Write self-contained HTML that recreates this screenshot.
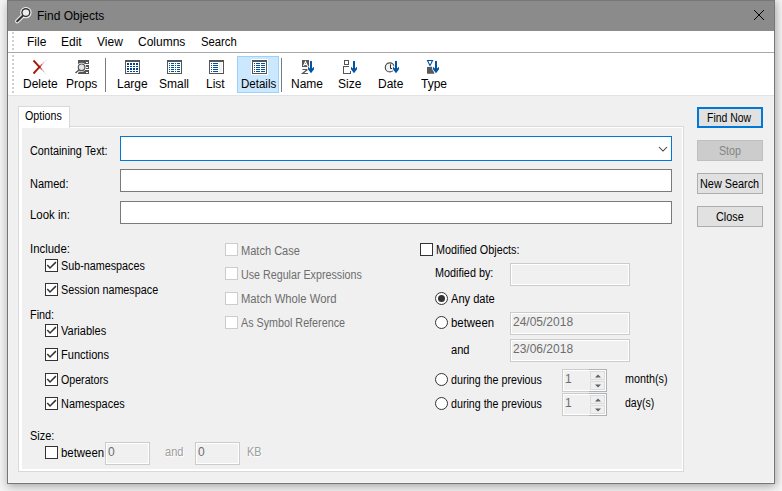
<!DOCTYPE html>
<html><head><meta charset="utf-8">
<style>
*{margin:0;padding:0;box-sizing:border-box}
html,body{width:782px;height:491px;overflow:hidden;background:#f4f4f4;position:relative;font-family:"Liberation Sans",sans-serif;color:#000}
.a{position:absolute}
.t{position:absolute;white-space:nowrap;line-height:normal}
.s12{font-size:12px}
.s11{font-size:11px}
.m{font-size:12px;transform-origin:0 0}
#win{left:7px;top:0;width:768px;height:484px;background:#f0f0f0;border:1px solid #767676;border-top:none;box-shadow:inset 1px 0 0 #f5f5f5,inset -1px -1px 0 #f5f5f5,0 3px 9px rgba(0,0,0,0.27),4px 0 5px rgba(0,0,0,0.07)}
#title{left:7px;top:0;width:768px;height:31px;background:#8b8b8b;border:1px solid #777;border-bottom:none}
.cb{position:absolute;width:13px;height:13px;border:1px solid #333;background:#fff}
.cbd{border-color:#cccccc}
.rd{position:absolute;width:13px;height:13px;border:1px solid #333;border-radius:50%;background:#fff}
.fld{position:absolute;border:1px solid #7a7a7a;background:#fff}
.dis{position:absolute;border:1px solid #cccccc;background:#f0f0f0;box-shadow:inset 0 0 0 1px #fff}
.btn{position:absolute;left:697px;width:66px;height:21px;border:1px solid #adadad;background:#e1e1e1;font-size:11px;text-align:center}
.g{color:#6d6d6d}
.gd{color:#9d9d9d;text-shadow:1px 1px 0 #fff}
.spb{position:absolute;width:15px;height:9px;border:1px solid #dcdcdc;background:#efefef}
.spb svg{position:absolute;left:4px;top:2px}
.grip{position:absolute;left:12px;width:2px;background:repeating-linear-gradient(to bottom,#d0d0d0 0,#d0d0d0 2px,transparent 2px,transparent 4px)}
</style></head><body>
<div class="a" id="win"></div>
<div class="a" id="title"></div>
<!-- magnifier icon -->
<svg class="a" style="left:0;top:0" width="40" height="31" viewBox="0 0 40 31">
 <line x1="17.2" y1="21.3" x2="22.6" y2="15.9" stroke="#f2f2f2" stroke-width="4.2" stroke-linecap="round"/>
 <circle cx="25.9" cy="12.6" r="5.7" fill="#f2f2f2"/>
 <line x1="17.2" y1="21.3" x2="22.6" y2="15.9" stroke="#333" stroke-width="2.1" stroke-linecap="round"/>
 <circle cx="25.9" cy="12.6" r="4.6" fill="#333"/>
 <circle cx="25.9" cy="12.6" r="3.2" fill="#ededed"/>
</svg>
<div class="t s12" style="left:37px;top:9px">Find Objects</div>
<svg class="a" style="left:753px;top:9px" width="12" height="12" viewBox="0 0 12 12"><path d="M1 1L11 11M11 1L1 11" stroke="#000" stroke-width="1"/></svg>

<!-- menu bar -->
<div class="a" style="left:8px;top:31px;width:766px;height:21px;background:#fff"></div>
<div class="a" style="left:8px;top:52px;width:766px;height:1px;background:#a8a8a8"></div>
<div class="grip" style="top:32px;height:18px"></div>
<div class="t s12" style="left:27px;top:35px">File</div>
<div class="t s12" style="left:61px;top:35px">Edit</div>
<div class="t s12" style="left:97px;top:35px">View</div>
<div class="t s12" style="left:138px;top:35px">Columns</div>
<div class="t s12" style="left:201px;top:35px;transform:scaleX(0.94);transform-origin:0 0">Search</div>

<!-- toolbar -->
<div class="a" style="left:8px;top:53px;width:766px;height:42px;background:#fff"></div>
<div class="a" style="left:8px;top:95px;width:766px;height:1px;background:#e3e3e3"></div>
<div class="grip" style="top:55px;height:38px"></div>
<div class="a" style="left:105px;top:58px;width:1px;height:34px;background:#7a7a7a"></div>
<div class="a" style="left:281px;top:58px;width:1px;height:34px;background:#7a7a7a"></div>
<div class="a" style="left:237px;top:56px;width:42px;height:37px;background:#cce8ff;border:1px solid #99d1ff"></div>


<!-- toolbar icons -->
<svg class="a" style="left:0;top:0" width="782" height="100" viewBox="0 0 782 100">
 
 <line x1="33.50" y1="60.50" x2="40.26" y2="67.78" stroke="#a31a0b" stroke-opacity="1.0" stroke-width="1.9"/><line x1="40.26" y1="67.78" x2="42.08" y2="69.74" stroke="#a31a0b" stroke-opacity="0.6" stroke-width="1.4"/><line x1="42.08" y1="69.74" x2="44.16" y2="71.98" stroke="#a31a0b" stroke-opacity="0.3" stroke-width="1.1"/><line x1="44.16" y1="71.98" x2="46.50" y2="74.50" stroke="#a31a0b" stroke-opacity="0.12" stroke-width="1.0"/><line x1="33.50" y1="73.50" x2="40.26" y2="66.22" stroke="#a31a0b" stroke-opacity="1.0" stroke-width="1.9"/><line x1="40.26" y1="66.22" x2="42.08" y2="64.26" stroke="#a31a0b" stroke-opacity="0.6" stroke-width="1.4"/><line x1="42.08" y1="64.26" x2="44.16" y2="62.02" stroke="#a31a0b" stroke-opacity="0.3" stroke-width="1.1"/><line x1="44.16" y1="62.02" x2="46.50" y2="59.50" stroke="#a31a0b" stroke-opacity="0.12" stroke-width="1.0"/>
 <!-- props -->
 <g shape-rendering="crispEdges">
  <rect x="78" y="60" width="11" height="4" fill="#555"/>
  <rect x="78" y="65" width="11" height="4" fill="#555"/>
  <rect x="78" y="70" width="11" height="4" fill="#555"/>
  <rect x="86" y="61.6" width="2" height="1.4" fill="#fff"/>
  <rect x="86" y="66.6" width="2" height="1.4" fill="#fff"/>
  <rect x="86" y="71.6" width="2" height="1.4" fill="#fff"/>
 </g>
 <line x1="75.5" y1="73" x2="79.5" y2="69.5" stroke="#fff" stroke-width="3.2"/>
 <circle cx="81.6" cy="67.3" r="4.6" fill="#fff"/>
 <line x1="75.5" y1="73" x2="79.5" y2="69.5" stroke="#555" stroke-width="1.5"/>
 <circle cx="81.6" cy="67.3" r="3.3" fill="#e6e6e6" stroke="#555" stroke-width="1.2"/>
 <!-- view icons -->
 <g shape-rendering="crispEdges">
  <rect x="251" y="59" width="17" height="16" fill="#fff"/>
  <g id="frm">
   <rect x="125" y="60" width="15" height="14" fill="#555"/>
   <rect x="126" y="62" width="13" height="11" fill="#fff"/>
  </g>
  <rect x="167" y="60" width="15" height="14" fill="#555"/><rect x="168" y="62" width="13" height="11" fill="#fff"/>
  <rect x="209" y="60" width="15" height="14" fill="#555"/><rect x="210" y="62" width="13" height="11" fill="#fff"/>
  <rect x="252" y="60" width="15" height="14" fill="#555"/><rect x="253" y="62" width="13" height="11" fill="#fff"/>
  <g fill="#00408f">
   <rect x="127" y="63" width="2" height="2"/><rect x="130" y="63" width="2" height="2"/><rect x="133" y="63" width="2" height="2"/><rect x="136" y="63" width="2" height="2"/>
   <rect x="127" y="66" width="2" height="1"/><rect x="130" y="66" width="2" height="1"/><rect x="133" y="66" width="2" height="1"/><rect x="136" y="66" width="2" height="1"/>
   <rect x="127" y="68" width="2" height="2"/><rect x="130" y="68" width="2" height="2"/><rect x="133" y="68" width="2" height="2"/><rect x="136" y="68" width="2" height="2"/>
   <rect x="127" y="71" width="2" height="1"/><rect x="130" y="71" width="2" height="1"/><rect x="133" y="71" width="2" height="1"/><rect x="136" y="71" width="2" height="1"/>
  </g>
  <g fill="#0050a0">
   <rect x="169" y="63" width="1" height="1"/><rect x="171" y="63" width="3" height="1"/><rect x="175" y="63" width="1" height="1"/><rect x="177" y="63" width="3" height="1"/><rect x="211" y="63" width="1" height="1"/><rect x="213" y="63" width="5" height="1"/><rect x="254" y="63" width="1" height="1"/><rect x="256" y="63" width="4" height="1"/><rect x="261" y="63" width="4" height="1"/><rect x="169" y="65" width="1" height="1"/><rect x="171" y="65" width="3" height="1"/><rect x="175" y="65" width="1" height="1"/><rect x="177" y="65" width="3" height="1"/><rect x="211" y="65" width="1" height="1"/><rect x="213" y="65" width="5" height="1"/><rect x="254" y="65" width="1" height="1"/><rect x="256" y="65" width="4" height="1"/><rect x="261" y="65" width="4" height="1"/><rect x="169" y="67" width="1" height="1"/><rect x="171" y="67" width="3" height="1"/><rect x="175" y="67" width="1" height="1"/><rect x="177" y="67" width="3" height="1"/><rect x="211" y="67" width="1" height="1"/><rect x="213" y="67" width="5" height="1"/><rect x="254" y="67" width="1" height="1"/><rect x="256" y="67" width="4" height="1"/><rect x="261" y="67" width="4" height="1"/><rect x="169" y="69" width="1" height="1"/><rect x="171" y="69" width="3" height="1"/><rect x="175" y="69" width="1" height="1"/><rect x="177" y="69" width="3" height="1"/><rect x="211" y="69" width="1" height="1"/><rect x="213" y="69" width="5" height="1"/><rect x="254" y="69" width="1" height="1"/><rect x="256" y="69" width="4" height="1"/><rect x="261" y="69" width="4" height="1"/><rect x="169" y="71" width="1" height="1"/><rect x="171" y="71" width="3" height="1"/><rect x="175" y="71" width="1" height="1"/><rect x="177" y="71" width="3" height="1"/><rect x="211" y="71" width="1" height="1"/><rect x="213" y="71" width="5" height="1"/><rect x="254" y="71" width="1" height="1"/><rect x="256" y="71" width="4" height="1"/><rect x="261" y="71" width="4" height="1"/>
  </g>
  <rect x="219" y="62" width="3" height="10" fill="#f2f2f2"/>
 </g>
 <!-- sort icons -->
 <g shape-rendering="crispEdges" fill="#555">
  <rect x="302" y="60" width="7" height="7"/>
 </g>
 <path d="M303.5 66L305.5 61.5L307.5 66M304.2 64.5H306.8" stroke="#fff" stroke-width="1.1" fill="none"/>
 <path d="M302.5 69.5H307.5L302.5 73.5H308" stroke="#555" stroke-width="1.2" fill="none"/>
 <g fill="none" stroke="#555" stroke-width="1" shape-rendering="crispEdges">
  <rect x="344.5" y="60.5" width="4" height="4"/>
  <path d="M349 66.5H343.5V73.5H350.5V71"/>
 </g>
 <circle cx="389.8" cy="67.4" r="4.5" fill="#f2f2f2" stroke="#4a4a4a" stroke-width="1.15"/>
 <path d="M390.5 64.3V68.5H392.5" stroke="#333" stroke-width="1" fill="none"/>
 <path d="M427.5 60.5H432.5L430 65.5Z" fill="none" stroke="#0050a0" stroke-width="1.1"/>
 <rect x="429" y="61.6" width="2" height="1.5" fill="#fff"/>
 <path d="M427 67H431L432 66.5L434.5 73.8H427Z" fill="#5a5a5a"/>

<path d="M310 61.2Q311 60.2 312 61.2V68.6L314 66.8V69.3L311 73.2L308 69.3V66.8L310 68.6Z" fill="#fff" stroke="#fff" stroke-width="1.4"/><path d="M310 61.2Q311 60.2 312 61.2V68.6L314 66.8V69.3L311 73.2L308 69.3V66.8L310 68.6Z" fill="#0054a6"/>
<path d="M353 61.2Q354 60.2 355 61.2V68.6L357 66.8V69.3L354 73.2L351 69.3V66.8L353 68.6Z" fill="#fff" stroke="#fff" stroke-width="1.4"/><path d="M353 61.2Q354 60.2 355 61.2V68.6L357 66.8V69.3L354 73.2L351 69.3V66.8L353 68.6Z" fill="#0054a6"/>
<path d="M395 61.2Q396 60.2 397 61.2V68.6L399 66.8V69.3L396 73.2L393 69.3V66.8L395 68.6Z" fill="#fff" stroke="#fff" stroke-width="1.4"/><path d="M395 61.2Q396 60.2 397 61.2V68.6L399 66.8V69.3L396 73.2L393 69.3V66.8L395 68.6Z" fill="#0054a6"/>
<path d="M435 61.2Q436 60.2 437 61.2V68.6L439 66.8V69.3L436 73.2L433 69.3V66.8L435 68.6Z" fill="#fff" stroke="#fff" stroke-width="1.4"/><path d="M435 61.2Q436 60.2 437 61.2V68.6L439 66.8V69.3L436 73.2L433 69.3V66.8L435 68.6Z" fill="#0054a6"/>
</svg>
<div class="t s12" style="left:23px;top:77px">Delete</div>
<div class="t s12" style="left:66px;top:77px">Props</div>
<div class="t s12" style="left:117px;top:77px">Large</div>
<div class="t s12" style="left:159px;top:77px">Small</div>
<div class="t s12" style="left:206px;top:77px">List</div>
<div class="t s12" style="left:241px;top:77px;transform:scaleX(0.96);transform-origin:0 0">Details</div>
<div class="t s12" style="left:291px;top:77px">Name</div>
<div class="t s12" style="left:338px;top:77px">Size</div>
<div class="t s12" style="left:378px;top:77px">Date</div>
<div class="t s12" style="left:421px;top:77px">Type</div>

<!-- tab panel -->
<div class="a" style="left:18px;top:126px;width:666px;height:346px;border:1px solid #d9d9d9;background:#fff"></div>
<div class="a" style="left:22px;top:128px;width:660px;height:341px;background:#f0f0f0"></div>
<div class="a" style="left:18px;top:106px;width:52px;height:22px;border:1px solid #d9d9d9;border-bottom:none;background:#fff"></div>
<div class="t m" style="left:25px;top:109px;transform:scaleX(0.888)">Options</div>

<!-- buttons -->
<div class="btn" style="top:107px;border:2px solid #0078d7"></div>
<div class="btn" style="top:140px;border-color:#bfbfbf;background:#cccccc"></div>
<div class="btn" style="top:173px"></div>
<div class="btn" style="top:206px"></div>
<div class="t m" style="left:707px;top:111px;transform:scaleX(0.87)">Find Now</div>
<div class="t m" style="left:719px;top:144px;color:#838383;transform:scaleX(0.89)">Stop</div>
<div class="t m" style="left:700px;top:177px;transform:scaleX(0.905)">New Search</div>
<div class="t m" style="left:716px;top:210px;transform:scaleX(0.903)">Close</div>
<!-- fields -->
<div class="t m" style="left:30px;top:144px;transform:scaleX(0.904)">Containing Text:</div>
<div class="fld" style="left:120px;top:136px;width:552px;height:25px;border-color:#0078d7"></div>
<svg class="a" style="left:658px;top:145px" width="10" height="7" viewBox="0 0 10 7"><path d="M1 2L5 6L9 2" fill="none" stroke="#3a3a3a" stroke-width="1.05"/></svg>
<div class="t m" style="left:30px;top:177px;transform:scaleX(0.915)">Named:</div>
<div class="fld" style="left:120px;top:169px;width:552px;height:23px"></div>
<div class="t m" style="left:30px;top:208px;transform:scaleX(0.951)">Look in:</div>
<div class="fld" style="left:120px;top:201px;width:552px;height:23px"></div>

<!-- include -->
<div class="t m" style="left:30px;top:242px;transform:scaleX(0.949)">Include:</div>
<div class="cb" style="left:45px;top:259px"><svg width="11" height="11" viewBox="1 1 11 11" style="position:absolute;left:0;top:0"><path d="M2.3 6.1L5 9L10.9 3.1" fill="none" stroke="#333" stroke-width="1.5"/></svg></div>
<div class="t m" style="left:61px;top:259px;transform:scaleX(0.898)">Sub-namespaces</div>
<div class="cb" style="left:45px;top:283px"><svg width="11" height="11" viewBox="1 1 11 11" style="position:absolute;left:0;top:0"><path d="M2.3 6.1L5 9L10.9 3.1" fill="none" stroke="#333" stroke-width="1.5"/></svg></div>
<div class="t m" style="left:61px;top:283px;transform:scaleX(0.899)">Session namespace</div>
<div class="t m" style="left:30px;top:308px;transform:scaleX(0.904)">Find:</div>
<div class="cb" style="left:45px;top:324px"><svg width="11" height="11" viewBox="1 1 11 11" style="position:absolute;left:0;top:0"><path d="M2.3 6.1L5 9L10.9 3.1" fill="none" stroke="#333" stroke-width="1.5"/></svg></div>
<div class="t m" style="left:61px;top:324px;transform:scaleX(0.919)">Variables</div>
<div class="cb" style="left:45px;top:348px"><svg width="11" height="11" viewBox="1 1 11 11" style="position:absolute;left:0;top:0"><path d="M2.3 6.1L5 9L10.9 3.1" fill="none" stroke="#333" stroke-width="1.5"/></svg></div>
<div class="t m" style="left:61px;top:348px;transform:scaleX(0.922)">Functions</div>
<div class="cb" style="left:45px;top:373px"><svg width="11" height="11" viewBox="1 1 11 11" style="position:absolute;left:0;top:0"><path d="M2.3 6.1L5 9L10.9 3.1" fill="none" stroke="#333" stroke-width="1.5"/></svg></div>
<div class="t m" style="left:61px;top:373px;transform:scaleX(0.887)">Operators</div>
<div class="cb" style="left:45px;top:397px"><svg width="11" height="11" viewBox="1 1 11 11" style="position:absolute;left:0;top:0"><path d="M2.3 6.1L5 9L10.9 3.1" fill="none" stroke="#333" stroke-width="1.5"/></svg></div>
<div class="t m" style="left:61px;top:397px;transform:scaleX(0.909)">Namespaces</div>

<!-- middle -->
<div class="cb cbd" style="left:225px;top:243px"></div>
<div class="t m g" style="left:241px;top:244px;transform:scaleX(0.920)">Match Case</div>
<div class="cb cbd" style="left:225px;top:267px"></div>
<div class="t m g" style="left:241px;top:268px;transform:scaleX(0.892)">Use Regular Expressions</div>
<div class="cb cbd" style="left:225px;top:292px"></div>
<div class="t m g" style="left:241px;top:292px;transform:scaleX(0.937)">Match Whole Word</div>
<div class="cb cbd" style="left:225px;top:316px"></div>
<div class="t m g" style="left:241px;top:316px;transform:scaleX(0.896)">As Symbol Reference</div>

<!-- right -->
<div class="cb" style="left:420px;top:243px"></div>
<div class="t m" style="left:436px;top:243px;transform:scaleX(0.900)">Modified Objects:</div>
<div class="t m" style="left:435px;top:266px;transform:scaleX(0.902)">Modified by:</div>
<div class="dis" style="left:510px;top:263px;width:120px;height:23px"></div>
<div class="rd" style="left:435px;top:292px"></div>
<div class="a" style="left:438px;top:295px;width:7px;height:7px;border-radius:50%;background:#333"></div>
<div class="t m" style="left:451px;top:292px;transform:scaleX(0.924)">Any date</div>
<div class="rd" style="left:435px;top:316px"></div>
<div class="t m" style="left:451px;top:316px;transform:scaleX(0.949)">between</div>
<div class="dis" style="left:510px;top:312px;width:120px;height:23px"></div>
<div class="t m g" style="left:513px;top:315px">24/05/2018</div>
<div class="t m" style="left:451px;top:343px;transform:scaleX(0.925)">and</div>
<div class="dis" style="left:510px;top:339px;width:120px;height:23px"></div>
<div class="t m g" style="left:513px;top:342px">23/06/2018</div>

<div class="rd" style="left:435px;top:373px"></div>
<div class="t m" style="left:451px;top:373px;transform:scaleX(0.890)">during the previous</div>
<div class="dis" style="left:562px;top:369px;width:45px;height:23px"></div>
<div class="t m g" style="left:565px;top:372px">1</div><div class="a" style="left:589px;top:369px;width:18px;height:23px;border:1px solid #adb2b5;border-left:none"></div><div class="spb" style="left:590px;top:371px"><svg width="6" height="4" viewBox="0 0 6 4"><path d="M0 3.5L3 0.5L6 3.5Z" fill="#606060"/></svg></div><div class="spb" style="left:590px;top:381px"><svg width="6" height="4" viewBox="0 0 6 4"><path d="M0 0.5L3 3.5L6 0.5Z" fill="#606060"/></svg></div>
<div class="t m" style="left:625px;top:372px;transform:scaleX(0.897)">month(s)</div>
<div class="rd" style="left:435px;top:397px"></div>
<div class="t m" style="left:451px;top:397px;transform:scaleX(0.890)">during the previous</div>
<div class="dis" style="left:562px;top:393px;width:45px;height:23px"></div>
<div class="t m g" style="left:565px;top:396px">1</div><div class="a" style="left:589px;top:393px;width:18px;height:23px;border:1px solid #adb2b5;border-left:none"></div><div class="spb" style="left:590px;top:395px"><svg width="6" height="4" viewBox="0 0 6 4"><path d="M0 3.5L3 0.5L6 3.5Z" fill="#606060"/></svg></div><div class="spb" style="left:590px;top:405px"><svg width="6" height="4" viewBox="0 0 6 4"><path d="M0 0.5L3 3.5L6 0.5Z" fill="#606060"/></svg></div>
<div class="t m" style="left:625px;top:396px;transform:scaleX(0.875)">day(s)</div>

<!-- size -->
<div class="t m" style="left:30px;top:429px;transform:scaleX(0.912)">Size:</div>
<div class="cb" style="left:45px;top:446px"></div>
<div class="t m" style="left:61px;top:446px;transform:scaleX(0.95)">between</div>
<div class="dis" style="left:105px;top:442px;width:45px;height:23px"></div>
<div class="t m g" style="left:108px;top:445px">0</div>
<div class="t m gd" style="left:165px;top:445px;transform:scaleX(0.925)">and</div>
<div class="dis" style="left:195px;top:442px;width:45px;height:23px"></div>
<div class="t m g" style="left:198px;top:445px">0</div>
<div class="t m gd" style="left:247px;top:445px;transform:scaleX(0.9)">KB</div>
</body></html>
